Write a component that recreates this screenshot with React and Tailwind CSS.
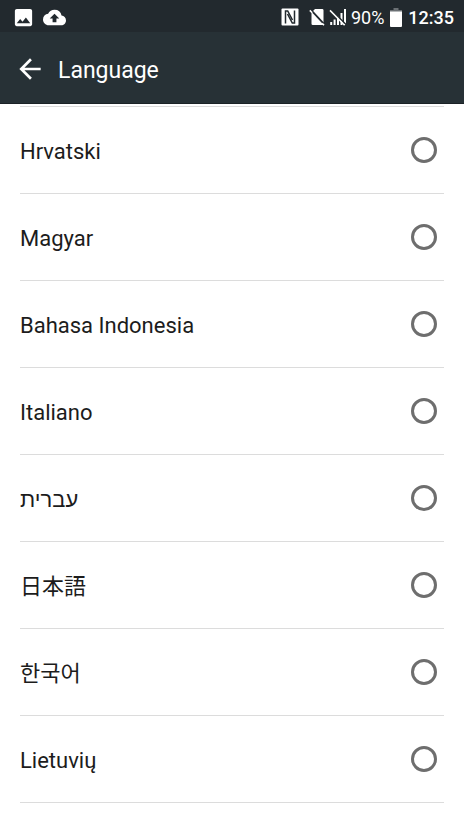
import { useState } from 'react';
import { MdArrowBack, MdBackup, MdImage } from 'react-icons/md';

const languages = [
  { code: 'hr', name: 'Hrvatski' },
  { code: 'hu', name: 'Magyar' },
  { code: 'id', name: 'Bahasa Indonesia' },
  { code: 'it', name: 'Italiano' },
  { code: 'he', name: 'עברית' },
  { code: 'ja', name: '日本語' },
  { code: 'ko', name: '한국어' },
  { code: 'lt', name: 'Lietuvių' },
];

function NfcIcon() {
  return (
    <svg className="size-[18px]" viewBox="0 0 18 18" fill="none" aria-hidden="true">
      <rect x="0.5" y="0.5" width="17" height="17" rx="1" fill="#fff" />
      <path d="M4.5 15.5V3h2.2l4.8 9M13.5 2.5V15h-2.2L6.5 6" stroke="#22292e" strokeWidth="1.5" />
    </svg>
  );
}

function NoSimIcon() {
  return (
    <svg className="h-[18px] w-4" viewBox="0 0 16 18" fill="none" aria-hidden="true">
      <path d="M6 1h7.2a1.3 1.3 0 0 1 1.3 1.3v13.4a1.3 1.3 0 0 1-1.3 1.3H3.8a1.3 1.3 0 0 1-1.3-1.3V4.5z" fill="#fff" />
      <path d="M2.6 2.6l13 14" stroke="#22292e" strokeWidth="1.8" />
      <path d="M0.8 2.4l2.4 2.4M13.2 15.4l1.8 1.8" stroke="#fff" strokeWidth="1.6" />
    </svg>
  );
}

function NoSignalIcon() {
  return (
    <svg className="size-[18px]" viewBox="0 0 18 18" fill="none" aria-hidden="true">
      <path d="M2.2 14v3M5.6 11.5V17M9 8.5V17M12.5 5v12M16 1v16" stroke="#fff" strokeWidth="2" />
      <path d="M2.2 1.8l15 15" stroke="#22292e" strokeWidth="1.6" />
      <path d="M1 2.4l14.6 14.8" stroke="#fff" strokeWidth="1.5" />
    </svg>
  );
}

function BatteryIcon() {
  return (
    <svg className="h-[19px] w-3" viewBox="0 0 12 19" aria-hidden="true">
      <path d="M3.5 0h5v2H12v2H0V2h3.5z" fill="#6b7074" />
      <path d="M0 3.5h12V18a1 1 0 0 1-1 1H1a1 1 0 0 1-1-1z" fill="#fff" />
    </svg>
  );
}

function StatusBar() {
  return (
    <div className="flex h-8 items-center justify-between bg-[#22292e] pt-0.5 pr-2.5 pl-3 text-white">
      <div className="flex items-center gap-2">
        <MdImage className="size-[23px]" />
        <MdBackup className="size-[23px]" />
      </div>
      <div className="flex items-center">
        <NfcIcon />
        <span className="ml-2.5 flex items-center gap-1">
          <NoSimIcon />
          <NoSignalIcon />
        </span>
        <span className="ml-1 text-[18px]">90%</span>
        <span className="mx-1.5">
          <BatteryIcon />
        </span>
        <span className="text-[18px] font-medium">12:35</span>
      </div>
    </div>
  );
}

function LanguageRow({ language, checked, onSelect }) {
  return (
    <li className="border-b border-[#dcdcdc]">
      <label className="flex h-[86px] cursor-pointer items-center justify-between pr-[7px]">
        <span lang={language.code} className="pt-0.5">{language.name}</span>
        <input
          type="radio"
          name="language"
          value={language.code}
          checked={checked}
          onChange={() => onSelect(language.code)}
          className="size-[26px] appearance-none rounded-full border-3 border-[#6e6e6e] checked:border-8 checked:border-teal-600"
        />
      </label>
    </li>
  );
}

function App() {
  const [selected, setSelected] = useState('');

  return (
    <div className="min-h-screen bg-white font-['Roboto','Noto_Sans','Noto_Sans_CJK_JP','Noto_Sans_CJK_KR',sans-serif]">
      <StatusBar />

      {/* App bar */}
      <header className="flex h-[72px] items-center gap-3 border-b border-[#1b2226] bg-[#273136] px-3.5 pt-0.5 text-white">
        <button type="button" aria-label="Back">
          <MdArrowBack className="size-8" />
        </button>
        <h1 className="pt-1.5 text-[23px]">Language</h1>
      </header>

      {/* Language list */}
      <main className="px-5 pt-0.5">
        <ul className="border-t border-[#dcdcdc] text-[22px] text-[#1c1c1c]">
          {languages.map((language) => (
            <LanguageRow
              key={language.code}
              language={language}
              checked={selected === language.code}
              onSelect={setSelected}
            />
          ))}
        </ul>
      </main>
    </div>
  );
}

export default App;
